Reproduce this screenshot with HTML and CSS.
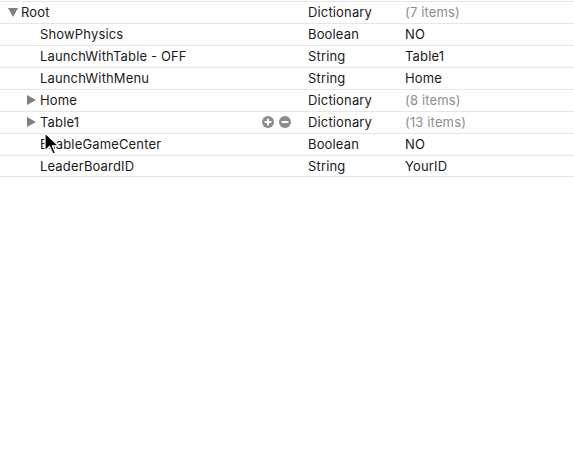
FILE: index.html
```html
<!DOCTYPE html>
<html>
<head>
<meta charset="utf-8">
<link rel="stylesheet" href="styles.css">
</head>
<body>
<div class="plist">
  <div class="row">
    <div class="key lvl0"><span class="tri open"></span>Root</div>
    <div class="type">Dictionary</div>
    <div class="value muted">(7 items)</div>
  </div>
  <div class="row">
    <div class="key lvl1">ShowPhysics</div>
    <div class="type">Boolean</div>
    <div class="value">NO</div>
  </div>
  <div class="row">
    <div class="key lvl1">LaunchWithTable - OFF</div>
    <div class="type">String</div>
    <div class="value">Table1</div>
  </div>
  <div class="row">
    <div class="key lvl1">LaunchWithMenu</div>
    <div class="type">String</div>
    <div class="value">Home</div>
  </div>
  <div class="row">
    <div class="key lvl1"><span class="tri closed"></span>Home</div>
    <div class="type">Dictionary</div>
    <div class="value muted">(8 items)</div>
  </div>
  <div class="row">
    <div class="key lvl1"><span class="tri closed"></span>Table1
      <span class="btns">
        <svg width="12" height="12" viewBox="0 0 12 12"><circle cx="6" cy="6" r="6" fill="#8c8c8c"/><rect x="2.6" y="5" width="6.8" height="2" fill="#fff"/><rect x="5" y="2.6" width="2" height="6.8" fill="#fff"/></svg>
        <svg width="12" height="12" viewBox="0 0 12 12"><circle cx="6" cy="6" r="6" fill="#8c8c8c"/><rect x="2.6" y="5" width="6.8" height="2" fill="#fff"/></svg>
      </span>
    </div>
    <div class="type">Dictionary</div>
    <div class="value muted">(13 items)</div>
  </div>
  <div class="row">
    <div class="key lvl1">EnableGameCenter</div>
    <div class="type">Boolean</div>
    <div class="value">NO</div>
  </div>
  <div class="row">
    <div class="key lvl1">LeaderBoardID</div>
    <div class="type">String</div>
    <div class="value">YourID</div>
  </div>
</div>
<svg class="cursor" width="16" height="24" viewBox="0 0 16 24"><path d="M1 1 L1 19 L5.5 14.5 L9 22 L11.5 21 L8.3 13.8 L14.5 13.8 Z" fill="#000" stroke="#fff" stroke-width="1.2" stroke-linejoin="round"/></svg>
</body>
</html>
```
FILE: styles.css
```css
html, body {
  margin: 0;
  padding: 0;
  background: #fff;
}
body {
  font-family: "Inter", "Liberation Sans", sans-serif;
  font-size: 13px;
  letter-spacing: 0.15px;
  color: #1a1a1a;
  position: relative;
  width: 574px;
  height: 468px;
  overflow: hidden;
}
.plist {
  padding-top: 1px;
}
.row {
  display: grid;
  grid-template-columns: 308px 97px 1fr;
  height: 21px;
  padding-bottom: 1px;
  box-sizing: border-box;
  height: 22px;
  align-items: center;
  border-top: 1px solid #e6e6e6;
}
.row:last-child {
  border-bottom: 1px solid #e6e6e6;
  height: 22px;
}
.key {
  position: relative;
  display: flex;
  align-items: center;
  white-space: nowrap;
}
.lvl0 { padding-left: 8px; }
.lvl1 { padding-left: 40px; }
.lvl1 .tri { margin-left: -13px; }
.tri {
  display: inline-block;
  width: 0;
  height: 0;
  margin-right: 3px;
}
.tri.open {
  border-left: 5px solid transparent;
  border-right: 5px solid transparent;
  border-top: 9px solid #7f7f7f;
  margin-top: 1px;
}
.tri.closed {
  border-top: 5px solid transparent;
  border-bottom: 5px solid transparent;
  border-left: 9px solid #7f7f7f;
  margin-right: 4px;
}
.muted { color: #8d8d8d; }
.btns {
  position: absolute;
  left: 262px;
  top: 50%;
  transform: translateY(-50%);
  display: flex;
  gap: 5px;
}
.btns svg { display: block; }
.cursor {
  position: absolute;
  left: 44px;
  top: 132px;
}
```
